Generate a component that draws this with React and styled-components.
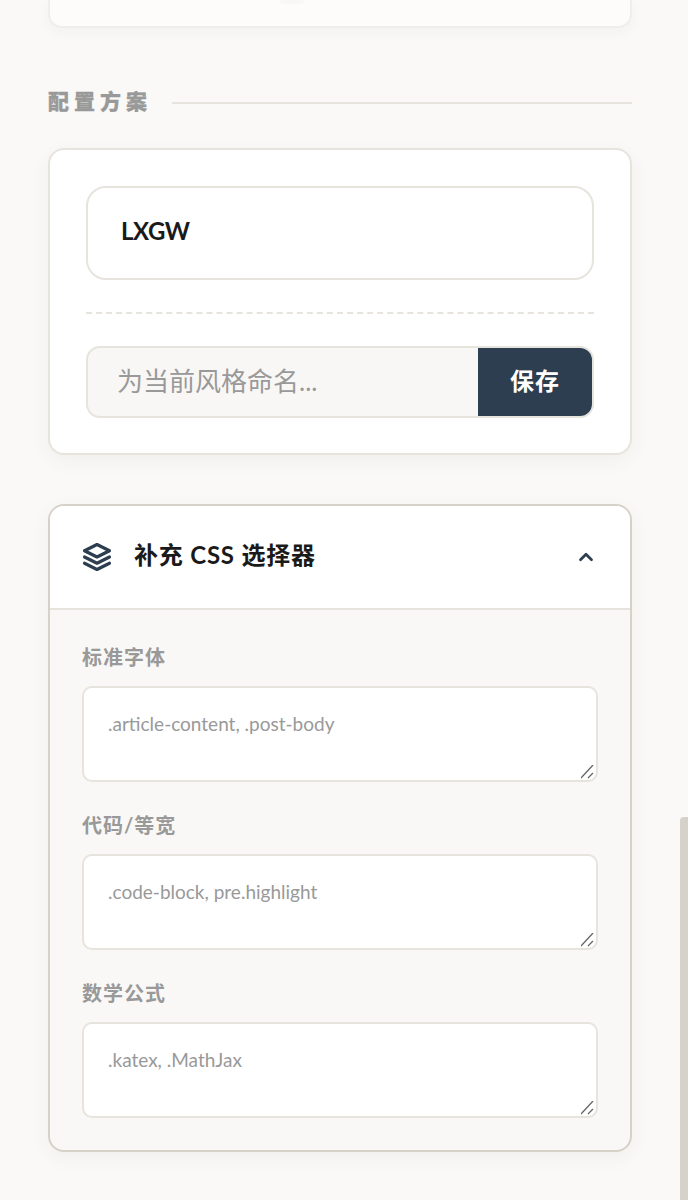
import React from "react";
import styled, { createGlobalStyle } from "styled-components";

const FONT = `"Lato", "Noto Sans CJK SC", sans-serif`;

const RESIZE_GRIP = `url("data:image/svg+xml,%3Csvg xmlns='http://www.w3.org/2000/svg' width='16' height='16'%3E%3Cpath d='M1 14 13 1M8 14l5-5' stroke='%23666' stroke-width='1.3' fill='none'/%3E%3C/svg%3E")`;

const GlobalStyle = createGlobalStyle`
  html, body {
    margin: 0;
    padding: 0;
    height: 1200px;
    overflow: hidden;
    background: #faf9f7;
    font-family: ${FONT};
  }
  * {
    box-sizing: border-box;
  }
`;

const Page = styled.div`
  padding: 0 56px 0 48px;
  height: 1200px;
  display: flex;
  flex-direction: column;
`;

const TopCard = styled.div`
  height: 28px;
  padding-left: 230px;
  background: #fdfcfb;
  border: 2px solid #f0eee9;
  border-top: none;
  border-radius: 0 0 14px 14px;
  box-shadow: 0 4px 14px rgba(60, 50, 40, 0.04);
`;

const ThumbEdge = styled.div`
  width: 24px;
  height: 3px;
  border-radius: 0 0 12px 12px;
  background: #f6f4f1;
  filter: blur(1.5px);
`;

const SectionHead = styled.div`
  display: flex;
  align-items: center;
  gap: 25px;
  margin-top: 60px;
  height: 30px;
`;

const SectionTitle = styled.h2`
  margin: -6px -5px 0 0;
  font-size: 21px;
  font-weight: 900;
  letter-spacing: 5px;
  -webkit-text-stroke: 0.3px #999;
  color: #999;
  white-space: nowrap;
`;

const Rule = styled.div`
  flex: 1;
  height: 2px;
  background: #e7e4de;
`;

const Card = styled.section`
  margin-top: 30px;
  padding: 36px 36px;
  height: 307px;
  background: #fff;
  border: 2px solid #e7e4de;
  border-radius: 16px;
  box-shadow: 0 6px 20px rgba(60, 50, 40, 0.05);
`;

const Preset = styled.div`
  height: 94px;
  padding: 0 0 6px 33px;
  display: flex;
  align-items: center;
  border: 2px solid #e7e4de;
  border-radius: 20px;
  font-size: 24px;
  font-weight: 700;
  letter-spacing: -0.5px;
  color: #1a1a1a;
`;

const Dashed = styled.div`
  margin: 32px 0;
  border-top: 2px dashed #e7e4de;
`;

const SaveRow = styled.div`
  height: 72px;
  display: flex;
  border: 2px solid #e7e4de;
  border-radius: 14px;
  overflow: hidden;
  background: #f9f7f5;
`;

const NameInput = styled.input`
  flex: 1;
  min-width: 0;
  padding: 0 0 2px 29px;
  border: none;
  outline: none;
  background: transparent;
  font-family: ${FONT};
  font-size: 26px;
  &::placeholder {
    color: #999;
    opacity: 1;
  }
`;

const SaveButton = styled.button`
  width: 114px;
  padding: 0 0 6px;
  border: none;
  background: #2c3e50;
  color: #fff;
  font-family: ${FONT};
  font-size: 24px;
  font-weight: 700;
  letter-spacing: 1px;
`;

const Accordion = styled.section`
  margin-top: 49px;
  height: 648px;
  border: 2px solid #d6d1c9;
  border-radius: 16px;
  overflow: hidden;
  background: #faf8f6;
  box-shadow: 0 6px 20px rgba(60, 50, 40, 0.05);
`;

const AccordionHead = styled.header`
  height: 104px;
  padding: 0 33px 0 32px;
  display: flex;
  align-items: center;
  background: #fff;
  border-bottom: 2px solid #e7e4de;
  color: #2c3e50;
`;

const AccordionTitle = styled.h3`
  flex: 1;
  margin: -8px 0 0 22px;
  font-size: 24px;
  font-weight: 700;
  letter-spacing: 0.8px;
  color: #1a1a1a;
`;

const AccordionBody = styled.div`
  padding: 35px 32px;
  display: flex;
  flex-direction: column;
  gap: 31px;
`;

const Field = styled.label`
  display: flex;
  flex-direction: column;
  gap: 17px;
`;

const FieldLabel = styled.span`
  height: 24px;
  line-height: 24px;
  font-size: 20px;
  font-weight: 700;
  letter-spacing: 1px;
  color: #999;
`;

const SelectorArea = styled.textarea`
  display: block;
  width: 100%;
  height: 96px;
  padding: 23px 24px;
  border: 2px solid #e7e4de;
  border-radius: 10px;
  outline: none;
  background: #fff;
  font-family: ${FONT};
  font-size: 19px;
  line-height: 26px;
  &::placeholder {
    color: #999;
    opacity: 1;
  }
  &::-webkit-resizer {
    width: 16px;
    height: 16px;
    background: ${RESIZE_GRIP} no-repeat right bottom;
  }
`;

const ScrollThumb = styled.div`
  position: fixed;
  right: 0;
  top: 817px;
  bottom: 0;
  width: 8px;
  border-radius: 4px 0 0 0;
  background: #d6d1c9;
`;

const LayersIcon = () => (
  <svg width="30" height="30" viewBox="0 0 24 24" fill="none" stroke="currentColor" strokeWidth="2.5" strokeLinecap="round" strokeLinejoin="round">
    <path d="M12 2 2 7l10 5 10-5-10-5z" />
    <path d="M2 17l10 5 10-5" />
    <path d="M2 12l10 5 10-5" />
  </svg>
);

const ChevronUp = () => (
  <svg width="22" height="22" viewBox="0 0 24 24" fill="none" stroke="currentColor" strokeWidth="3" strokeLinecap="round" strokeLinejoin="round">
    <path d="m18 15-6-6-6 6" />
  </svg>
);

const fields = [
  { label: "标准字体", placeholder: ".article-content, .post-body" },
  { label: "代码/等宽", placeholder: ".code-block, pre.highlight" },
  { label: "数学公式", placeholder: ".katex, .MathJax" },
];

export default function App() {
  return (
    <Page>
      <GlobalStyle />
      <TopCard>
        <ThumbEdge />
      </TopCard>
      <SectionHead>
        <SectionTitle>配置方案</SectionTitle>
        <Rule />
      </SectionHead>
      <Card>
        <Preset>LXGW</Preset>
        <Dashed />
        <SaveRow>
          <NameInput placeholder="为当前风格命名..." />
          <SaveButton>保存</SaveButton>
        </SaveRow>
      </Card>
      <Accordion>
        <AccordionHead>
          <LayersIcon />
          <AccordionTitle>补充 CSS 选择器</AccordionTitle>
          <ChevronUp />
        </AccordionHead>
        <AccordionBody>
          {fields.map((f) => (
            <Field key={f.label}>
              <FieldLabel>{f.label}</FieldLabel>
              <SelectorArea placeholder={f.placeholder} />
            </Field>
          ))}
        </AccordionBody>
      </Accordion>
      <ScrollThumb />
    </Page>
  );
}
